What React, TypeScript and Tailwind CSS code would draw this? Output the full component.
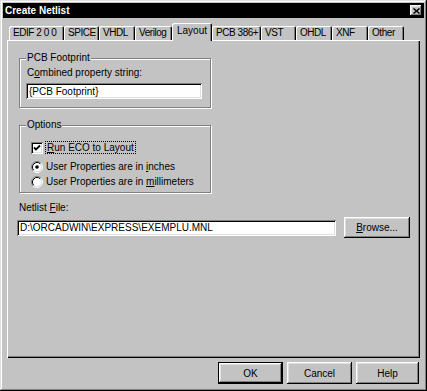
import React from "react";

const raised =
  "shadow-[inset_-1px_-1px_#000,inset_1px_1px_#fff,inset_-2px_-2px_#808080,inset_2px_2px_#dfdfdf]";
const sunken =
  "shadow-[inset_1px_1px_#808080,inset_-1px_-1px_#fff,inset_2px_2px_#000,inset_-2px_-2px_#dfdfdf]";

function Tab({ label, w, active }: { label: string; w: number; active?: boolean }) {
  if (active) {
    return (
      <div
        className="relative z-10 -mb-px flex h-[18px] items-start whitespace-nowrap rounded-t-[2px] bg-[#c3c3c3] pl-[5px] pt-[2px] leading-[12px] shadow-[inset_1px_1px_#fff,inset_-1px_0_#000,inset_-2px_0_#808080]"
        style={{ width: w }}
      >
        {label}
      </div>
    );
  }
  return (
    <div
      className="flex h-[14px] items-center whitespace-nowrap rounded-t-[2px] pl-[4px] leading-[12px] tracking-[-0.45px] shadow-[inset_1px_1px_#fff,inset_-1px_0_#000,inset_-2px_0_#808080]"
      style={{ width: w }}
    >
      {label}
    </div>
  );
}

function Group({
  label,
  className,
  children,
}: {
  label: string;
  className: string;
  children?: React.ReactNode;
}) {
  return (
    <div
      className={
        "relative border border-[#808080] shadow-[inset_1px_1px_#fff,1px_1px_#fff] " + className
      }
    >
      <span className="absolute -top-[7px] left-[6px] bg-[#c3c3c3] px-[1px] leading-[12px]">
        {label}
      </span>
      {children}
    </div>
  );
}

function Radio({ checked }: { checked?: boolean }) {
  return (
    <svg width="12" height="12" viewBox="0 0 12 12" className="shrink-0">
      <circle cx="6" cy="6" r="4.5" fill="#fff" />
      <path d="M2.11 9.89 A5.5 5.5 0 0 1 9.89 2.11" stroke="#808080" fill="none" />
      <path d="M9.89 2.11 A5.5 5.5 0 0 1 2.11 9.89" stroke="#fff" fill="none" />
      <path d="M2.82 9.18 A4.5 4.5 0 0 1 9.18 2.82" stroke="#000" fill="none" />
      <path d="M9.18 2.82 A4.5 4.5 0 0 1 2.82 9.18" stroke="#dfdfdf" fill="none" />
      {checked && <circle cx="6" cy="6" r="1.8" fill="#000" />}
    </svg>
  );
}

function Checkbox() {
  return (
    <div className={"flex h-[12px] w-[12px] shrink-0 items-center justify-center bg-white " + sunken}>
      <svg width="8" height="8" viewBox="0 0 8 8">
        <path d="M1 3.5 L3 5.5 L7 1.5" stroke="#000" strokeWidth="1.8" fill="none" />
      </svg>
    </div>
  );
}

export default function App() {
  const tabs: [string, number][] = [
    ["EDIF 2 0 0", 55],
    ["SPICE", 35],
    ["VHDL", 36],
    ["Verilog", 37],
    ["Layout", 40],
    ["PCB 386+", 49],
    ["VST", 35],
    ["OHDL", 36],
    ["XNF", 36],
    ["Other", 36],
  ];
  return (
    <div
      className={
        "flex h-[391px] w-[427px] flex-col whitespace-nowrap bg-[#c3c3c3] p-[3px] text-[10px] text-black font-['Liberation_Sans',Arial,sans-serif] shadow-[inset_-1px_-1px_#000,inset_1px_1px_#dfdfdf,inset_-2px_-2px_#808080,inset_2px_2px_#fff]"
      }
    >
      {/* Title bar */}
      <div className="flex h-[15px] items-center justify-between bg-black pl-[2px] pr-[2px]">
        <span className="text-[10px] font-bold leading-[12px] text-white">Create Netlist</span>
        <div className={"flex h-[11px] w-[12px] items-center justify-center bg-[#c3c3c3] " + raised}>
          <svg width="7" height="6" viewBox="0 0 7 6">
            <path d="M0.5 0.5 L6.5 5.5 M6.5 0.5 L0.5 5.5" stroke="#000" strokeWidth="1.5" />
          </svg>
        </div>
      </div>

      {/* Tabs + panel */}
      <div className="mt-[5px] flex flex-col px-[4px]">
        <div className="flex h-[17px] items-end pl-[2px]">
          {tabs.map(([t, w]) => (
            <Tab key={t} label={t} w={w} active={t === "Layout"} />
          ))}
        </div>
        <div className="flex h-[318px] w-[413px] flex-col pl-[12px] pt-[18px] shadow-[inset_1px_1px_#fff,inset_-1px_-1px_#000,inset_-2px_-2px_#808080]">
          <Group label="PCB Footprint" className="h-[50px] w-[192px] pl-[6px] pt-[8px]">
            <div className="pl-[1px] leading-[12px]">
              C<span className="underline">o</span>mbined property string:
            </div>
            <div className={"mt-[4px] flex h-[16px] w-[176px] items-center bg-white pl-[3px] " + sunken}>
              {"{PCB Footprint}"}
            </div>
          </Group>

          <Group label="Options" className="mt-[17px] h-[68px] w-[192px] pl-[11px] pt-[15px]">
            <div className="flex items-center gap-[2px]">
              <Checkbox />
              <span className="border border-dotted border-black px-[1px] leading-[11px]">
                <span className="underline">R</span>un ECO to Layout
              </span>
            </div>
            <div className="mt-[7px] flex items-center gap-[3px]">
              <Radio checked />
              <span className="leading-[12px]">
                User Properties are in <span className="underline">i</span>nches
              </span>
            </div>
            <div className="mt-[3px] flex items-center gap-[3px]">
              <Radio />
              <span className="leading-[12px]">
                User Properties are in <span className="underline">m</span>illimeters
              </span>
            </div>
          </Group>

          <div className="mt-[9px] leading-[12px]">
            Netlist <span className="underline">F</span>ile:
          </div>
          <div className="-ml-[2px] mt-[3px] flex items-center gap-[8px]">
            <div className={"flex h-[16px] w-[319px] items-center bg-white pl-[3px] " + sunken}>
              {"D:\\ORCADWIN\\EXPRESS\\EXEMPLU.MNL"}
            </div>
            <div className={"flex h-[21px] w-[66px] items-center justify-center " + raised}>
              <span>
                <span className="underline">B</span>rowse...
              </span>
            </div>
          </div>
        </div>
      </div>

      {/* Buttons */}
      <div className="mt-[4px] flex justify-end gap-[4px] pr-[5px]">
        <div className="flex h-[22px] w-[65px] items-center justify-center border border-black">
          <div className={"flex h-full w-full items-center justify-center " + raised}>OK</div>
        </div>
        <div className={"flex h-[22px] w-[65px] items-center justify-center " + raised}>Cancel</div>
        <div className={"flex h-[22px] w-[63px] items-center justify-center " + raised}>Help</div>
      </div>
    </div>
  );
}
